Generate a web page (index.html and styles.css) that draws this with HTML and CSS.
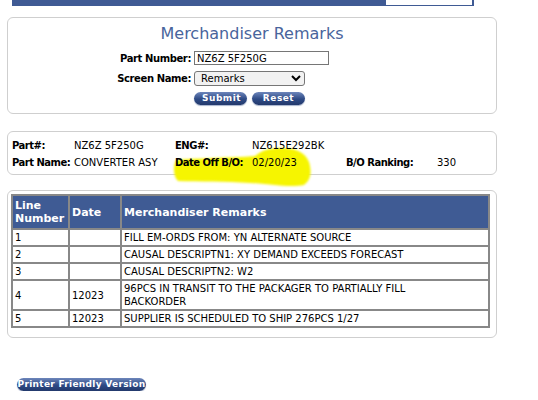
FILE: index.html
```html
<!DOCTYPE html>
<html lang="en">
<head>
    <title>Merchandiser Remarks</title>
    <meta charset="UTF-8">
    <link rel="stylesheet" href="styles.css">
</head>
<body>
    <div class="topbar">
        <div class="user-box"></div>
    </div>

    <div class="panel search-panel">
        <h1>Merchandiser Remarks</h1>
        <form class="search-form">
            <label for="partNumber">Part Number:</label>
            <input type="text" id="partNumber" value="NZ6Z 5F250G">
            <label for="screenName">Screen Name:</label>
            <select id="screenName">
                <option>Remarks</option>
            </select>
            <span></span>
            <div class="buttons">
                <button type="submit" class="pill">Submit</button>
                <button type="reset" class="pill">Reset</button>
            </div>
        </form>
    </div>

    <div class="panel info-panel">
        <!-- marker highlight scribbled over the B/O date -->
        <svg class="marker" width="150" height="50" viewBox="0 0 150 50">
            <path d="M6 22 C30 20 60 20 85 18 C92 12 100 10 112 10 C125 10 135 14 139 24 C142 34 141 42 134 47 C120 50 100 46 80 45 C55 43 30 44 8 43 C3 38 3 28 6 22 Z" fill="#f6f500"/>
        </svg>
        <div class="info-grid">
            <b>Part#:</b><span>NZ6Z 5F250G</span><b>ENG#:</b><span>NZ615E292BK</span><span></span><span></span>
            <b>Part Name:</b><span>CONVERTER ASY</span><b>Date Off B/O:</b><span>02/20/23</span><b>B/O Ranking:</b><span>330</span>
        </div>
    </div>

    <div class="panel remarks-panel">
        <table class="remarks">
            <tr>
                <th class="col-line">Line<br>Number</th>
                <th class="col-date">Date</th>
                <th>Merchandiser Remarks</th>
            </tr>
            <tr><td>1</td><td></td><td>FILL EM-ORDS FROM: YN ALTERNATE SOURCE</td></tr>
            <tr><td>2</td><td></td><td>CAUSAL DESCRIPTN1: XY DEMAND EXCEEDS FORECAST</td></tr>
            <tr><td>3</td><td></td><td>CAUSAL DESCRIPTN2: W2</td></tr>
            <tr><td>4</td><td>12023</td><td>96PCS IN TRANSIT TO THE PACKAGER TO PARTIALLY FILL<br>BACKORDER</td></tr>
            <tr><td>5</td><td>12023</td><td>SUPPLIER IS SCHEDULED TO SHIP 276PCS 1/27</td></tr>
        </table>
    </div>

    <button class="pill printer">Printer Friendly Version</button>
</body>
</html>
```

FILE: styles.css
```css
body {
    margin: 0;
    font-family: "DejaVu Sans", Verdana, sans-serif;
    font-size: 10px;
    color: #000;
    background: #fff;
}
.topbar {
    margin-left: 12px;
    width: 462px;
    height: 6px;
    background-color: #3f5a94;
    display: flex;
    justify-content: flex-end;
}
.user-box {
    width: 86px;
    height: 5px;
    margin-right: 2px;
    background-color: #fff;
}
.panel {
    margin: 0 41px 0 7px;
    border: 1px solid #cfcfcf;
    border-radius: 6px;
    position: relative;
}
.search-panel {
    margin-top: 11px;
    height: 95px;
}
h1 {
    margin: 6px 0 0;
    text-align: center;
    font-weight: normal;
    font-size: 16px;
    line-height: 20px;
    color: #48649c;
}
.search-form {
    display: grid;
    grid-template-columns: 183px auto;
    column-gap: 3px;
    row-gap: 6px;
    align-items: center;
    margin-top: 7px;
}
.search-form label {
    text-align: right;
    font-weight: bold;
    letter-spacing: -0.4px;
}
.search-form input {
    width: 135px;
    height: 14px;
    box-sizing: border-box;
    border: 1px solid #767676;
    padding: 0 2px;
    font-family: inherit;
    font-size: 10px;
    color: #000;
}
.search-form select {
    width: 111px;
    height: 15px;
    box-sizing: border-box;
    border: 1px solid #767676;
    border-radius: 3px;
    padding: 0 2px;
    font-family: inherit;
    font-size: 10px;
    background-color: #f2f2f2;
}
.buttons {
    display: flex;
    gap: 5px;
}
.pill {
    height: 13px;
    padding: 0 8px;
    border: none;
    border-radius: 7px;
    background: linear-gradient(#6d86bb, #2e4a85 55%, #23396c);
    box-shadow: 0 1px 1px #a6b2cc;
    color: #fff;
    font-family: "DejaVu Sans", Verdana, sans-serif;
    font-size: 9px;
    font-weight: bold;
    letter-spacing: 0.5px;
    line-height: 13px;
    cursor: pointer;
}
.buttons .pill {
    width: 53px;
}
.info-panel {
    margin-top: 17px;
    height: 42px;
}
.marker {
    position: absolute;
    left: 162px;
    top: 6px;
    filter: blur(1px);
}
.info-grid {
    position: relative;
    display: grid;
    grid-template-columns: 62px 101px 77px 94px 91px auto;
    row-gap: 4px;
    padding: 7px 0 0 4px;
    line-height: 13px;
    white-space: nowrap;
}
.info-grid b {
    letter-spacing: -0.5px;
}
.remarks-panel {
    margin-top: 15px;
    padding: 3px;
    height: 140px;
}
.remarks {
    width: 479px;
    border: 1px solid #888;
    border-spacing: 0;
}
.remarks th,
.remarks td {
    border: 1px solid #888;
    padding: 1px 2px;
    text-align: left;
    line-height: 13px;
    vertical-align: middle;
}
.remarks th {
    background-color: #3f5b94;
    color: #fff;
    font-size: 11px;
    font-weight: bold;
    padding: 3px 2px;
}
.col-line {
    width: 51px;
}
.col-date {
    width: 46px;
}
.printer {
    margin: 40px 0 0 17px;
    width: 129px;
    padding: 0;
    letter-spacing: 0.3px;
}
```
